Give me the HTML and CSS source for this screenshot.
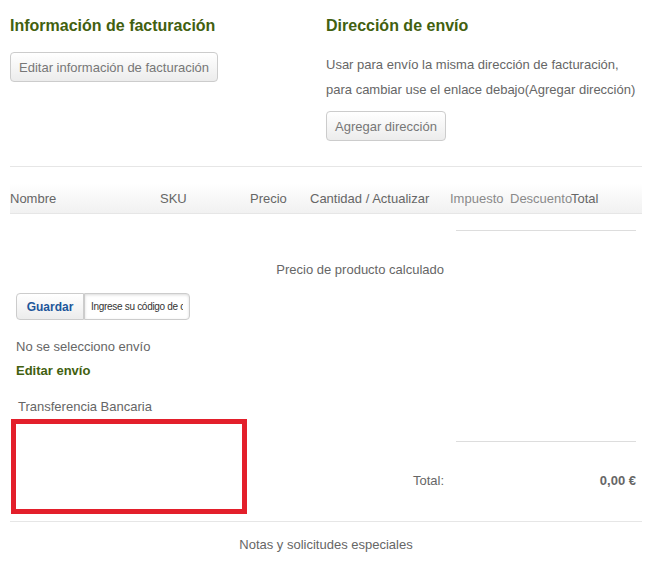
FILE: index.html
```html
<!DOCTYPE html>
<html lang="es">

<head>
    <meta charset="UTF-8" />
    <meta name="viewport" content="width=device-width, initial-scale=1.0" />
    <title>Carrito</title>
    <link rel="stylesheet" href="styles.css">
</head>

<body>
    <div class="addresses">
        <div class="billing">
            <h3>Información de facturación</h3>
            <button type="button" class="btn">Editar información de facturación</button>
        </div>
        <div class="shipping-address">
            <h3>Dirección de envío</h3>
            <p>Usar para envío la misma dirección de facturación,<br>para cambiar use el enlace debajo(Agregar dirección)</p>
            <button type="button" class="btn">Agregar dirección</button>
        </div>
    </div>

    <hr class="sep">

    <div class="cart-head">
        <span>Nombre</span>
        <span>SKU</span>
        <span>Precio</span>
        <span>Cantidad / Actualizar</span>
        <span class="muted">Impuesto</span>
        <span class="muted">Descuento</span>
        <span>Total</span>
    </div>

    <div class="summary">
        <div></div>
        <div class="rule rule-top"></div>

        <div class="label calc">Precio de producto calculado</div>
        <div></div>

        <form class="coupon">
            <button type="button" class="btn btn-save">Guardar</button>
            <input type="text" placeholder="Ingrese su código de cupón">
        </form>

        <div class="ship-info">
            <div>No se selecciono envío</div>
            <a href="#" class="edit-ship">Editar envío</a>
        </div>

        <div class="pay-row">
            <div class="payment">
                <div class="pay-name">Transferencia Bancaria</div>
                <div class="pay-box"></div>
            </div>
            <span class="label total-label">Total:</span>
        </div>
        <div class="total-cell">
            <div class="rule rule-total"></div>
            <div class="total-value">0,00 €</div>
        </div>
    </div>

    <hr class="sep sep-bottom">

    <div class="notes">Notas y solicitudes especiales</div>
</body>

</html>
```

FILE: styles.css
```css
* {
    box-sizing: border-box;
}

body {
    margin: 0;
    padding: 0 14px 0 10px;
    font-family: "Liberation Sans", Arial, sans-serif;
    font-size: 13px;
    color: #666;
    background: #fff;
}

h3 {
    margin: 16px 0 16px;
    font-size: 16px;
    line-height: 20px;
    color: #42600f;
}

.addresses {
    display: grid;
    grid-template-columns: 316px 1fr;
}

.shipping-address p {
    margin: 0 0 9px;
    line-height: 25px;
}

.btn {
    height: 30px;
    padding: 0 8px;
    border: 1px solid #ccc;
    border-radius: 4px;
    background: linear-gradient(#fff, #ececec);
    font-family: inherit;
    font-size: 13px;
    color: #777;
}

.sep {
    margin: 25px 0 0;
    border: none;
    border-top: 1px solid #e6e6e6;
    height: 0;
}

.cart-head {
    display: grid;
    grid-template-columns: 150px 90px 60px 140px 60px 61px 1fr;
    margin-top: 16px;
    height: 31px;
    align-items: center;
    background: linear-gradient(#fff, #f1f1f1);
    border-bottom: 1px solid #e6e6e6;
    white-space: nowrap;
}

.muted {
    color: #8a8a8a;
}

.summary {
    display: grid;
    grid-template-columns: 1fr 180px;
    column-gap: 12px;
    margin-right: 6px;
}

.rule {
    border-bottom: 1px solid #ddd;
}

.rule-top {
    height: 17px;
}

.label {
    text-align: right;
    line-height: 20px;
}

.calc {
    margin-top: 29px;
}

.coupon {
    grid-column: 1 / -1;
    display: flex;
    margin: 13px 0 0 6px;
}

.btn-save {
    width: 68px;
    height: 27px;
    padding: 0;
    border-radius: 4px 0 0 4px;
    font-size: 12px;
    font-weight: bold;
    color: #1d569a;
}

.coupon input {
    width: 106px;
    height: 27px;
    padding: 0 6px;
    border: 1px solid #ccc;
    border-radius: 0 4px 4px 0;
    box-shadow: inset 0 1px 3px rgba(0, 0, 0, 0.15);
    font-family: inherit;
    font-size: 10px;
    letter-spacing: -0.3px;
}

.coupon input::placeholder {
    color: #333;
}

.ship-info {
    grid-column: 1 / -1;
    margin: 15px 0 0 6px;
    line-height: 24px;
}

.edit-ship {
    color: #42600f;
    font-weight: bold;
    text-decoration: none;
}

.pay-row {
    display: flex;
    justify-content: space-between;
    align-items: flex-end;
    margin-top: 12px;
}

.pay-name {
    margin-left: 8px;
    line-height: 24px;
}

.pay-box {
    width: 236px;
    height: 95px;
    margin-left: 1px;
    border: 5px solid #e31f2b;
}

.total-label {
    margin-bottom: 23px;
}

.total-cell {
    margin-top: 12px;
}

.rule-total {
    height: 47px;
}

.total-value {
    margin-top: 29px;
    line-height: 20px;
    text-align: right;
    font-weight: bold;
}

.sep-bottom {
    margin-top: 7px;
}

.notes {
    margin-top: 13px;
    line-height: 20px;
    text-align: center;
}
```
